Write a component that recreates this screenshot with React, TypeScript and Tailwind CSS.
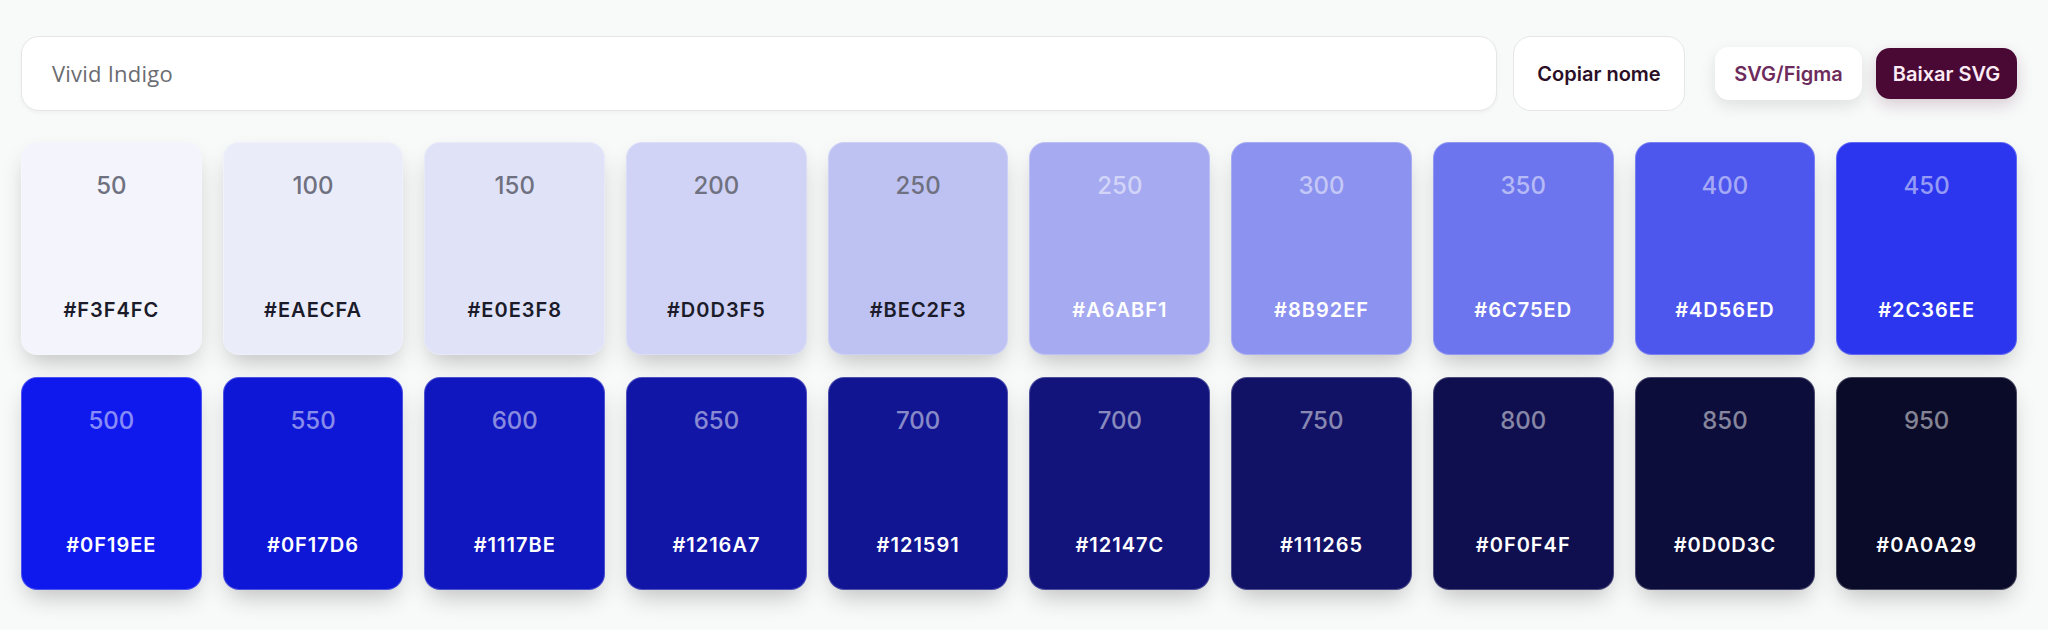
import React from 'react';

type Swatch = { step: string; hex: string; light: boolean };

// Escala gerada para "Vivid Indigo"
const swatches: Swatch[] = [
    { step: '50', hex: '#F3F4FC', light: true },
    { step: '100', hex: '#EAECFA', light: true },
    { step: '150', hex: '#E0E3F8', light: true },
    { step: '200', hex: '#D0D3F5', light: true },
    { step: '250', hex: '#BEC2F3', light: true },
    { step: '250', hex: '#A6ABF1', light: false },
    { step: '300', hex: '#8B92EF', light: false },
    { step: '350', hex: '#6C75ED', light: false },
    { step: '400', hex: '#4D56ED', light: false },
    { step: '450', hex: '#2C36EE', light: false },
    { step: '500', hex: '#0F19EE', light: false },
    { step: '550', hex: '#0F17D6', light: false },
    { step: '600', hex: '#1117BE', light: false },
    { step: '650', hex: '#1216A7', light: false },
    { step: '700', hex: '#121591', light: false },
    { step: '700', hex: '#12147C', light: false },
    { step: '750', hex: '#111265', light: false },
    { step: '800', hex: '#0F0F4F', light: false },
    { step: '850', hex: '#0D0D3C', light: false },
    { step: '950', hex: '#0A0A29', light: false },
];

const SwatchCard = ({ swatch }: { swatch: Swatch }) => {
    return (
        <div
            className="h-[213px] rounded-[16px] border border-white/25 flex flex-col items-center justify-between pt-[28px] pb-[31px] shadow-[0_12px_24px_-6px_rgba(0,0,0,0.24)] font-['Inter',sans-serif]"
            style={{ backgroundColor: swatch.hex }}
        >
            <span className={`text-[24px] leading-[30px] font-medium ${swatch.light ? 'text-[#6f7180]' : 'text-white/50'}`}>
                {swatch.step}
            </span>
            <span className={`text-[20px] leading-[26px] font-semibold tracking-[0.05em] ${swatch.light ? 'text-[#1b1b2a]' : 'text-white'}`}>
                {swatch.hex}
            </span>
        </div>
    );
};

const App: React.FC = () => {
    return (
        <div className="min-h-screen w-full bg-[#f8f9f9] pl-[21px] pr-[31px] pt-[36px] pb-[40px]">
            {/* Top bar */}
            <div className="flex items-center">
                <div className="flex-1 h-[75px] bg-white border border-[#e6e6e8] rounded-[18px] shadow-[0_2px_4px_rgba(0,0,0,0.04)] flex items-center pl-[30px]">
                    <span className="text-[22px] tracking-[0.01em] text-[#6b6c72] font-['Open_Sans',sans-serif]">Vivid Indigo</span>
                </div>
                <button className="ml-4 w-[172px] h-[75px] bg-white border border-[#e6e6e8] rounded-[18px] text-[20px] font-semibold text-[#2a0f27] font-['Inter',sans-serif]">
                    Copiar nome
                </button>
                <div className="ml-[30px] flex items-center gap-[14px]">
                    <button className="w-[147px] h-[53px] bg-white rounded-[14px] shadow-[0_6px_16px_rgba(0,0,0,0.10)] text-[20px] font-semibold text-[#6d2b5c] font-['Inter',sans-serif]">
                        SVG/Figma
                    </button>
                    <button className="w-[141px] h-[51px] bg-[#4a0934] rounded-[14px] shadow-[0_6px_16px_rgba(74,9,52,0.18)] text-[20px] font-semibold text-[#fcebf5] font-['Inter',sans-serif]">
                        Baixar SVG
                    </button>
                </div>
            </div>

            {/* Swatch grid */}
            <div className="mt-[31px] grid grid-cols-10 gap-x-[21px] gap-y-[22px]">
                {swatches.map((s, i) => (
                    <SwatchCard key={i} swatch={s} />
                ))}
            </div>
        </div>
    );
};

export default App;
